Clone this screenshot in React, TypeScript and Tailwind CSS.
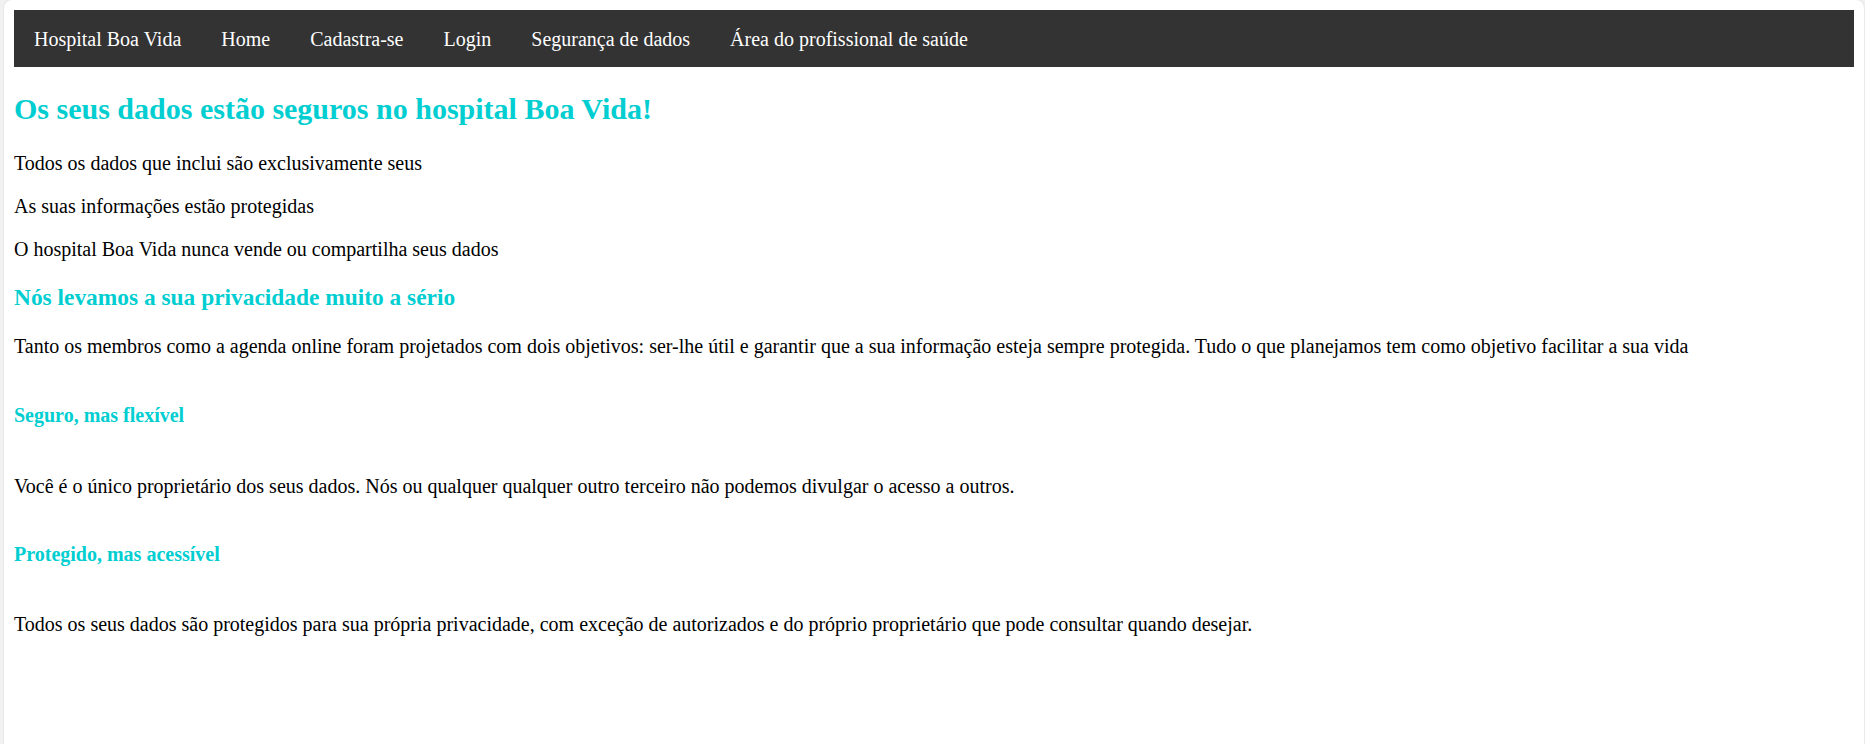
export default function App() {
  const links = [
    "Hospital Boa Vida",
    "Home",
    "Cadastra-se",
    "Login",
    "Segurança de dados",
    "Área do profissional de saúde",
  ];

  return (
    <div className="min-h-screen bg-[#f1f1f1] pl-[4px] pr-[1px] font-['Liberation_Serif','Times_New_Roman',serif] text-black">
      <div className="min-h-[744px] rounded-t-lg bg-white p-[10px] shadow-[0_0_2px_rgba(0,0,0,0.12)]">
        <nav className="flex bg-[#333333]">
          {links.map((l) => (
            <a
              key={l}
              href="#"
              className="block px-5 pt-[18px] pb-[16px] text-[20px] leading-[23px] text-white"
            >
              {l}
            </a>
          ))}
        </nav>

        <h2 className="mt-[25px] text-[30px] leading-[34.5px] font-bold text-[#00ced1]">
          Os seus dados estão seguros no hospital Boa Vida!
        </h2>
        <p className="mt-[25px] text-[20px] leading-[23px]">
          Todos os dados que inclui são exclusivamente seus
        </p>
        <p className="mt-[20px] text-[20px] leading-[23px]">
          As suas informações estão protegidas
        </p>
        <p className="mt-[20px] text-[20px] leading-[23px]">
          O hospital Boa Vida nunca vende ou compartilha seus dados
        </p>

        <h3 className="mt-[23px] text-[23.4px] leading-[27px] font-bold text-[#00ced1]">
          Nós levamos a sua privacidade muito a sério
        </h3>
        <p className="mt-[24px] text-[20px] leading-[23px]">
          Tanto os membros como a agenda online foram projetados com dois objetivos: ser-lhe útil e
          garantir que a sua informação esteja sempre protegida. Tudo o que planejamos tem como
          objetivo facilitar a sua vida
        </p>

        <h4 className="mt-[46px] text-[20px] leading-[23px] font-bold text-[#00ced1]">
          Seguro, mas flexível
        </h4>
        <p className="mt-[48px] text-[20px] leading-[23px]">
          Você é o único proprietário dos seus dados. Nós ou qualquer qualquer outro terceiro não
          podemos divulgar o acesso a outros.
        </p>

        <h4 className="mt-[45px] text-[20px] leading-[23px] font-bold text-[#00ced1]">
          Protegido, mas acessível
        </h4>
        <p className="mt-[47px] text-[20px] leading-[23px]">
          Todos os seus dados são protegidos para sua própria privacidade, com exceção de
          autorizados e do próprio proprietário que pode consultar quando desejar.
        </p>
      </div>
    </div>
  );
}
